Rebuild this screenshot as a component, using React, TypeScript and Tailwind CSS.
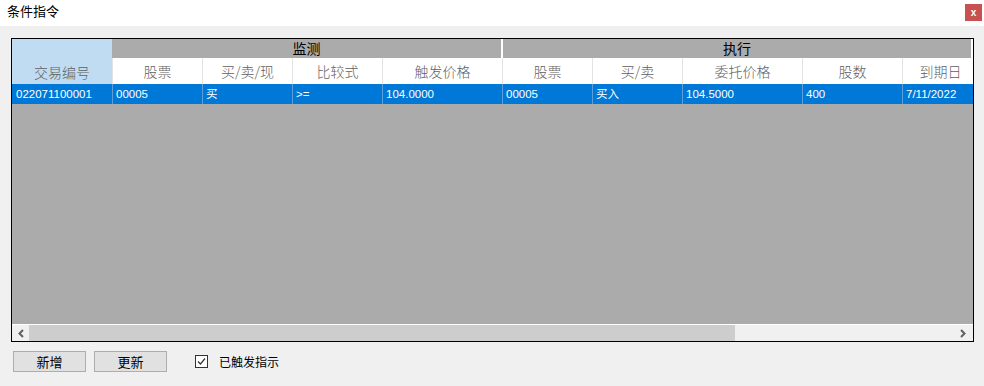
import React from "react";

type Col = { label: string; width: number };

// column widths measured from the screenshot
const monitorCols: Col[] = [
  { label: "股票", width: 90 },
  { label: "买/卖/现", width: 90 },
  { label: "比较式", width: 90 },
  { label: "触发价格", width: 120 },
];

const execCols: Col[] = [
  { label: "股票", width: 90 },
  { label: "买/卖", width: 90 },
  { label: "委托价格", width: 120 },
  { label: "股数", width: 100 },
  { label: "到期日", width: 76 },
];

const row = [
  "00005",
  "买",
  ">=",
  "104.0000",
  "00005",
  "买入",
  "104.5000",
  "400",
  "7/11/2022",
];

const allCols = [...monitorCols, ...execCols];

const cjk = "font-['Noto_Sans_CJK_SC','Noto_Sans',sans-serif]";
const latin = "font-['Liberation_Sans','Noto_Sans_CJK_SC',sans-serif]";

const App: React.FC = () => {
  return (
    <div className={`w-[984px] h-[386px] bg-[#f0f0f0] flex flex-col overflow-hidden ${cjk}`}>
      {/* title bar */}
      <div className="h-[26px] bg-white flex items-start justify-between shrink-0">
        <div className="pl-[7px] pt-[3px] text-[13px] leading-[16px] text-black">条件指令</div>
        <button className="mt-[4px] mr-[2px] w-[17px] h-[17px] bg-[#c75050] text-white text-[10px] font-bold leading-[15px] flex items-center justify-center font-['Liberation_Sans',sans-serif]">
          x
        </button>
      </div>

      {/* grid */}
      <div className="mt-[12px] ml-[11px] w-[963px] h-[304px] border border-black flex flex-col shrink-0 bg-white">
        {/* header */}
        <div className="flex h-[45px] shrink-0 overflow-hidden">
          <div className="w-[100px] shrink-0 bg-[#bfdcf3] flex items-end justify-center pb-[3px] text-[14px] leading-[18px] font-light text-[#5f5f5f]">
            交易编号
          </div>
          <div className="flex-1 flex flex-col overflow-hidden">
            <div className="flex h-[19px] shrink-0">
              <div className="w-[389px] shrink-0 bg-[#ababab] text-center text-[14px] leading-[19px] text-black">
                监测
              </div>
              <div className="w-[2px] shrink-0 bg-white" />
              <div className="w-[468px] shrink-0 bg-[#ababab] text-center text-[14px] leading-[19px] text-black">
                执行
              </div>
            </div>
            <div className="flex h-[26px] shrink-0">
              {allCols.map((c, i) => (
                <div
                  key={i}
                  className="shrink-0 border-l border-[#e3e3e3] flex items-center justify-center text-[14px] font-light text-[#5f5f5f]"
                  style={{ width: c.width }}
                >
                  {c.label}
                </div>
              ))}
            </div>
          </div>
        </div>

        {/* selected data row */}
        <div className={`flex h-[20px] shrink-0 bg-[#0078d7] overflow-hidden text-[11.5px] text-white ${latin}`}>
          <div className="w-[100px] shrink-0 pl-[4px] leading-[20px]">022071100001</div>
          {allCols.map((c, i) => (
            <div
              key={i}
              className="shrink-0 border-l border-[#5a9fdc] pl-[3px] leading-[20px]"
              style={{ width: c.width }}
            >
              {row[i]}
            </div>
          ))}
        </div>

        {/* empty area */}
        <div className="flex-1 bg-[#ababab]" />

        {/* horizontal scrollbar */}
        <div className="h-[17px] shrink-0 bg-[#f0f0f0] border-t border-white flex items-center">
          <div className="w-[17px] shrink-0 flex items-center justify-center">
            <svg width="8" height="9" viewBox="0 0 8 9">
              <path d="M6 1 L2.5 4.5 L6 8" fill="none" stroke="#606060" strokeWidth="2" />
            </svg>
          </div>
          <div className="w-[706px] h-full bg-[#cdcdcd]" />
          <div className="flex-1" />
          <div className="w-[17px] shrink-0 flex items-center justify-center mr-[2px]">
            <svg width="8" height="9" viewBox="0 0 8 9">
              <path d="M2 1 L5.5 4.5 L2 8" fill="none" stroke="#606060" strokeWidth="2" />
            </svg>
          </div>
        </div>
      </div>

      {/* bottom controls */}
      <div className="flex items-center mt-[9px] ml-[13px] h-[21px]">
        <button className="w-[73px] h-[21px] bg-[#e1e1e1] border border-[#adadad] text-[13px] leading-[19px] text-black">
          新增
        </button>
        <button className="ml-[8px] w-[73px] h-[21px] bg-[#e1e1e1] border border-[#adadad] text-[13px] leading-[19px] text-black">
          更新
        </button>
        <div className="ml-[28px] w-[13px] h-[13px] border border-[#333333] bg-white flex items-center justify-center">
          <svg width="9" height="9" viewBox="0 0 9 9">
            <path d="M1 4.5 L3.5 7 L8 1.5" fill="none" stroke="#333333" strokeWidth="1.2" />
          </svg>
        </div>
        <span className="ml-[11px] text-[12px] text-black">已触发指示</span>
      </div>
    </div>
  );
};

export default App;
